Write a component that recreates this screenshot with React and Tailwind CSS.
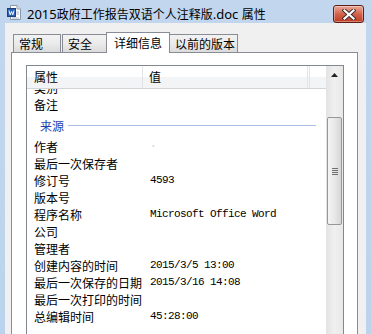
import React from "react";

const rows = [
  { label: "类别", value: "" },
  { label: "备注", value: "" },
  { group: "来源" },
  { label: "作者", value: "·", faint: true },
  { label: "最后一次保存者", value: "" },
  { label: "修订号", value: "4593" },
  { label: "版本号", value: "" },
  { label: "程序名称", value: "Microsoft Office Word" },
  { label: "公司", value: "" },
  { label: "管理者", value: "" },
  { label: "创建内容的时间", value: "2015/3/5 13:00" },
  { label: "最后一次保存的日期", value: "2015/3/16 14:08" },
  { label: "最后一次打印的时间", value: "" },
  { label: "总编辑时间", value: "45:28:00" },
  { label: "", value: "" },
];

function WordIcon() {
  return (
    <svg width="14" height="15" viewBox="0 0 14 15">
      <path d="M3.5 0.5 H10 L13.5 4 V14.5 H3.5 Z" fill="#fff" stroke="#8a98ab" />
      <path d="M10 0.5 V4 H13.5" fill="#e4e9f0" stroke="#8a98ab" />
      <rect x="0.5" y="3.5" width="8" height="8" fill="#2b5fb4" stroke="#1d3f7c" />
      <path d="M2 5.5 L3.2 9.8 L4.5 6.5 L5.8 9.8 L7 5.5" fill="none" stroke="#fff" strokeWidth="1" />
      <path d="M9.5 7 H12 M9.5 9 H12 M5 13 H12" stroke="#9fb2cc" strokeWidth="1" />
    </svg>
  );
}

function CloseButton() {
  return (
    <div className="w-[31px] h-[18px] mt-[5px] rounded-[3px] border border-[#5b1f1a] bg-linear-to-b from-[#e9a999] via-[#d4624c] to-[#c0391f] flex items-center justify-center shadow-[inset_0_0_0_1px_rgba(255,255,255,0.35)]">
      <svg width="14" height="11" viewBox="0 0 14 11">
        <path d="M2.5 1.5 L11.5 9.5 M11.5 1.5 L2.5 9.5" stroke="#3b2b2b" strokeWidth="4" strokeLinecap="square" />
        <path d="M2.5 1.5 L11.5 9.5 M11.5 1.5 L2.5 9.5" stroke="#ffffff" strokeWidth="2.2" strokeLinecap="square" />
      </svg>
    </div>
  );
}

function Tab({ label, selected, className }) {
  if (selected) {
    return (
      <div
        className={`h-[21px] mb-[-1px] relative z-10 bg-white border border-b-0 border-[#898c95] flex items-center justify-center text-[12px] leading-none text-black ${className}`}
      >
        {label}
      </div>
    );
  }
  return (
    <div
      className={`h-[18px] border border-b-0 border-[#898c95] bg-linear-to-b from-[#f2f2f2] via-[#ebebeb] to-[#dbdbdb] flex items-center pl-[5px] text-[12px] leading-none text-black ${className}`}
    >
      {label}
    </div>
  );
}

function Scrollbar() {
  return (
    <div className="w-[17px] bg-linear-to-r from-[#e3e3e3] via-[#f0f0f0] to-[#e8e8e8] flex flex-col">
      <div className="h-[17px] flex items-center justify-center">
        <svg width="7" height="4" viewBox="0 0 7 4">
          <path d="M0 4 L3.5 0 L7 4 Z" fill="#222" />
        </svg>
      </div>
      <div className="mt-[34px] mx-px h-[108px] rounded-[2px] border border-[#979797] bg-linear-to-r from-[#f4f4f4] via-[#e8e8e8] to-[#d6d6d6] flex flex-col items-center justify-center gap-[1px]">
        <div className="w-[6px] h-px bg-[#6f6f6f]" />
        <div className="w-[6px] h-px bg-[#6f6f6f]" />
        <div className="w-[6px] h-px bg-[#6f6f6f]" />
        <div className="w-[6px] h-px bg-[#6f6f6f]" />
      </div>
    </div>
  );
}

export default function App() {
  return (
    <div className="w-[371px] h-[334px] overflow-hidden bg-linear-to-b from-[#c2d7ee] to-[#bcd3ed] flex flex-col font-['Noto_Sans_CJK_SC',sans-serif]">
      {/* title bar */}
      <div className="h-[23px] shrink-0 flex items-start">
        <div className="ml-[7px] mt-[5px]">
          <WordIcon />
        </div>
        <div className="ml-[6px] mt-[4px] text-[12px] leading-[20px] text-black whitespace-nowrap">
          <span className="text-[13px] font-['Noto_Sans','Noto_Sans_CJK_SC',sans-serif]">2015</span>
          政府工作报告双语个人注释版
          <span className="text-[13px] font-['Noto_Sans','Noto_Sans_CJK_SC',sans-serif]">.doc </span>
          属性
        </div>
        <div className="ml-auto mr-[7px]">
          <CloseButton />
        </div>
      </div>

      {/* body */}
      <div className="flex-1 mx-[5px] bg-[#f0f0f0] pl-[6px] pr-[8px] pt-[9px] flex flex-col overflow-hidden">
        <div className="h-[20px] shrink-0 flex items-end">
          <Tab label="常规" className="w-[48px] ml-[2px]" />
          <Tab label="安全" className="w-[46px] ml-[1px]" />
          <Tab label="详细信息" selected className="w-[64px] ml-[-2px]" />
          <Tab label="以前的版本" className="w-[69px] ml-[-1px]" />
        </div>

        <div className="flex-1 bg-white border border-b-0 border-[#898c95] pl-[14px] pr-[13px] pt-[12px] flex flex-col">
          <div className="flex-1 border border-b-0 border-[#828790] flex overflow-hidden">
            <div className="flex-1 flex flex-col overflow-hidden">
              {/* header */}
              <div className="h-[23px] shrink-0 flex border-b border-[#d5d5d5] bg-linear-to-b from-[#ffffff] from-50% to-[#f3f4f6] to-50% text-[12px] leading-none text-black">
                <div className="w-[116px] border-r border-[#e3e4e8] flex items-center pl-[7px]">属性</div>
                <div className="w-[165px] border-r border-[#e3e4e8] flex items-center pl-[6px]">值</div>
                <div className="w-[2px] border-r border-[#e3e4e8]" />
              </div>
              {/* rows */}
              <div className="flex-1 overflow-hidden">
                <div className="mt-[-10px]">
                  {rows.map((r, i) =>
                    r.group ? (
                      <div key={i} className="h-[25px] flex items-center pl-[13px] pr-[10px]">
                        <span className="text-[12px] leading-none text-[#1f3fae]">{r.group}</span>
                        <div className="flex-1 h-px bg-[#a9bfe8] ml-[4px]" />
                      </div>
                    ) : (
                      <div key={i} className="h-[17px] flex items-center text-[12px] leading-none text-black">
                        <div className="w-[116px] pl-[7px] whitespace-nowrap">{r.label}</div>
                        <div
                          className={`pl-[7px] whitespace-nowrap font-['Liberation_Mono',monospace] text-[11px] tracking-[-0.6px] ${
                            r.faint ? "text-[#c8c8c8]" : "text-black"
                          }`}
                        >
                          {r.value}
                        </div>
                      </div>
                    )
                  )}
                </div>
              </div>
            </div>
            <Scrollbar />
          </div>
        </div>
      </div>
    </div>
  );
}
